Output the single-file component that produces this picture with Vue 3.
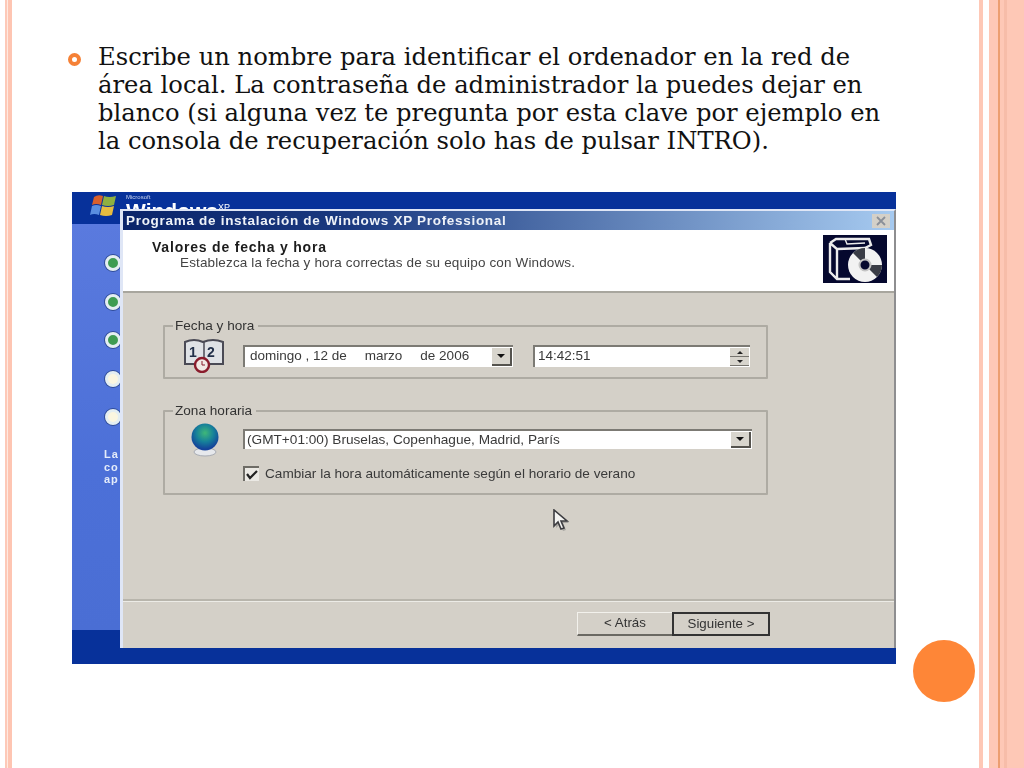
<script setup>
const lines = [
  'Escribe un nombre para identificar el ordenador en la red de',
  'área local. La contraseña de administrador la puedes dejar en',
  'blanco (si alguna vez te pregunta por esta clave por ejemplo en',
  'la consola de recuperación solo has de pulsar INTRO).'
]

const steps = ['done', 'done', 'done', 'todo', 'todo']
</script>

<template>
  <div class="slide">
    <div class="stripes-left">
      <span class="sl-a"></span>
      <span class="sl-b"></span>
      <span class="sl-c"></span>
    </div>

    <main class="content">
      <div class="bullet-row">
        <span class="bullet"></span>
        <p class="bullet-text">
          <span v-for="line in lines" :key="line" class="line">{{ line }}</span>
        </p>
      </div>

      <div class="shot">
        <div class="desk-top">
          <svg class="win-logo" viewBox="0 0 28 24" width="28" height="24">
            <path d="M5 3 Q9 0 14 2 L12 11 Q7 9 3 11 Z" fill="#d9602c" />
            <path d="M15 2 Q20 4 27 2 L25 11 Q19 13 13 11 Z" fill="#8fb040" />
            <path d="M3 12 Q7 10 12 12 L10 21 Q5 19 1 21 Z" fill="#5a8ee0" />
            <path d="M13 12 Q19 14 25 12 L23 21 Q17 23 11 21 Z" fill="#e6bc40" />
          </svg>
          <div class="win-brand">
            <span class="ms">Microsoft</span>
            <span class="wx">Windows<sup>XP</sup></span>
          </div>
        </div>
        <div class="desk-mid">
          <div class="steps">
            <span v-for="(s, i) in steps" :key="i" class="step" :class="s"></span>
          </div>
          <div class="side-note">La<br />co<br />ap</div>
        </div>
        <div class="desk-foot"></div>

        <div class="dialog">
          <div class="titlebar">
            <span class="title">Programa de instalación de Windows XP Professional</span>
            <span class="close">
              <svg viewBox="0 0 12 10" width="12" height="10">
                <path d="M2 1 L10 9 M10 1 L2 9" stroke="#8a8f98" stroke-width="1.8" />
              </svg>
            </span>
          </div>

          <div class="head">
            <div class="head-text">
              <div class="head-title">Valores de fecha y hora</div>
              <div class="head-sub">Establezca la fecha y hora correctas de su equipo con Windows.</div>
            </div>
            <div class="head-icon">
              <svg viewBox="0 0 64 48" width="64" height="48">
                <rect width="64" height="48" fill="#05082e" />
                <path d="M7 8 L7 37 L14 44 L27 44 M14 44 L14 14 L7 8 M7 8 L13 4 L46 4 L48 10 L42 13 L14 14" fill="none" stroke="#ececec" stroke-width="2.4" />
                <path d="M22 4 L24 9 L42 8" fill="none" stroke="#ececec" stroke-width="1.4" />
                <circle cx="42" cy="30" r="17" fill="#f2f2f2" />
                <path d="M42 30 L30 18 A17 17 0 0 1 42 13 Z M42 30 L59 30 A17 17 0 0 1 54 42 Z" fill="#3a3d46" />
                <circle cx="42" cy="30" r="5.5" fill="#05082e" stroke="#c4c4c4" stroke-width="2" />
              </svg>
            </div>
          </div>

          <div class="body">
            <fieldset class="group group-date">
              <legend>Fecha y hora</legend>
              <div class="group-row">
                <svg class="cal-icon" viewBox="0 0 44 36" width="44" height="36">
                  <path d="M3 5 Q12 1 21 5 Q31 1 41 5 L41 27 L3 27 Z" fill="#dfe2e6" stroke="#4a4a55" stroke-width="2" />
                  <path d="M22 5 L22 27" stroke="#4a4a55" stroke-width="1.5" />
                  <text x="7" y="20" class="cal-num">1</text>
                  <text x="25" y="20" class="cal-num">2</text>
                  <circle cx="20" cy="28" r="7" fill="#f2e8e4" stroke="#8a1c2c" stroke-width="2.4" />
                  <path d="M20 24 L20 28 L23 28" stroke="#8a1c2c" stroke-width="1" fill="none" />
                </svg>
                <div class="field date-field">
                  <span class="date-part p1">domingo , 12 de</span>
                  <span class="date-part p2">marzo</span>
                  <span class="date-part p3">de 2006</span>
                  <span class="drop"><i></i></span>
                </div>
                <div class="field time-field">
                  <span>14:42:51</span>
                  <span class="spin">
                    <b><i class="up"></i></b>
                    <b><i class="down"></i></b>
                  </span>
                </div>
              </div>
            </fieldset>

            <fieldset class="group group-zone">
              <legend>Zona horaria</legend>
              <div class="group-row zone-row">
                <svg class="globe" viewBox="0 0 36 34" width="36" height="34">
                  <defs>
                    <radialGradient id="gl" cx="50%" cy="35%" r="60%">
                      <stop offset="0" stop-color="#3fb878" />
                      <stop offset="0.55" stop-color="#16809a" />
                      <stop offset="1" stop-color="#14429a" />
                    </radialGradient>
                  </defs>
                  <ellipse cx="18" cy="29" rx="11" ry="4" fill="#e6e8ec" stroke="#a8acb4" />
                  <circle cx="18" cy="14" r="13.5" fill="url(#gl)" />
                </svg>
                <div class="field zone-field">
                  <span>(GMT+01:00) Bruselas, Copenhague, Madrid, París</span>
                  <span class="drop"><i></i></span>
                </div>
              </div>
              <label class="check-row">
                <span class="check">
                  <svg viewBox="0 0 12 10" width="12" height="10">
                    <path d="M1 4 L4 8 L11 1" stroke="#222" stroke-width="2.2" fill="none" />
                  </svg>
                </span>
                <span>Cambiar la hora automáticamente según el horario de verano</span>
              </label>
            </fieldset>
          </div>

          <div class="foot">
            <span class="btn back">&lt; Atrás</span>
            <span class="btn next">Siguiente &gt;</span>
          </div>

          <svg class="cursor" viewBox="0 0 22 26" width="22" height="26">
            <path d="M4 3 L4 19 L8 15 L11 22 L14 21 L11 14 L17 14 Z" fill="#8a8a88" opacity="0.6" />
            <path d="M2 1 L2 17 L6 13 L9 20 L12 19 L9 12 L15 12 Z" fill="#f4f4f2" stroke="#3c3c40" stroke-width="1.6" />
          </svg>
        </div>
      </div>
    </main>

    <div class="stripes-right">
      <span class="sr-a"></span>
      <span class="sr-gap"></span>
      <span class="sr-b"></span>
      <span class="sr-line"></span>
      <span class="sr-c"></span>
      <span class="sr-d"></span>
      <span class="sr-e"></span>
    </div>

    <span class="dot"></span>
  </div>
</template>

<style>
html, body {
  margin: 0;
  background: #fff;
}
</style>

<style scoped>
.slide {
  position: relative;
  display: flex;
  width: 1024px;
  height: 768px;
  overflow: hidden;
  background: #fff;
}

/* side stripes */
.stripes-left {
  display: flex;
  flex: none;
  width: 7px;
  margin-left: 5px;
}
.stripes-left span,
.stripes-right span {
  display: block;
}
.sl-a { width: 2px; background: #fdc9b8; }
.sl-b { width: 1px; background: #ffe9e0; }
.sl-c { width: 4px; background: #fec5b2; }

.stripes-right {
  display: flex;
  flex: none;
  width: 45px;
}
.sr-a { width: 4px; background: #fec8b6; }
.sr-gap { width: 6px; background: #fff; }
.sr-b { width: 9px; background: #fec8b6; }
.sr-line { width: 2px; background: #ec9e70; }
.sr-c { width: 4px; background: #fec8b6; }
.sr-d { width: 3px; background: #f7bda9; }
.sr-e { flex: 1; background: #fec8b6; }

.content {
  flex: 1;
  min-width: 0;
}

/* bullet text */
.bullet-row {
  display: flex;
  height: 192px;
  padding: 43px 0 0 56px;
  box-sizing: border-box;
}
.bullet {
  flex: none;
  width: 5px;
  height: 5px;
  margin: 10px 17px 0 0;
  border: 4px solid #f58136;
  border-radius: 50%;
}
.bullet-text {
  margin: 0;
  font-family: "DejaVu Serif", "Liberation Serif", serif;
  font-size: 24.25px;
  line-height: 28px;
  color: #111;
  white-space: nowrap;
}
.line {
  display: block;
}

/* screenshot */
.shot {
  position: relative;
  display: flex;
  flex-direction: column;
  width: 824px;
  height: 472px;
  margin-left: 60px;
  overflow: hidden;
  font-family: "Liberation Sans", Arial, sans-serif;
  filter: blur(0.7px);
}
.desk-top {
  display: flex;
  flex: none;
  height: 32px;
  padding: 2px 0 0 17px;
  box-sizing: border-box;
  background: #07319a;
}
.win-logo {
  flex: none;
}
.win-brand {
  display: flex;
  flex-direction: column;
  height: 15px;
  margin-left: 9px;
  overflow: hidden;
  color: #fff;
}
.ms {
  flex: none;
  font-size: 6px;
  line-height: 7px;
  color: #c8d4f0;
}
.wx {
  flex: none;
  font-size: 21px;
  font-weight: bold;
  line-height: 22px;
  margin-top: -1px;
}
.wx sup {
  font-size: 9px;
  font-weight: normal;
  line-height: 0;
}
.desk-mid {
  flex: 1;
  padding: 31px 0 0 33px;
  background: linear-gradient(180deg, #5a7ade 0%, #4c70d8 60%, #4a6ed4 100%);
}
.steps {
  display: flex;
  flex-direction: column;
  gap: 22.5px;
}
.step {
  width: 16px;
  height: 16px;
  box-sizing: border-box;
  border: 3px solid #e4eef2;
  border-radius: 50%;
  box-shadow: 0 0 0 1px #2f4c98;
}
.step.done { background: #3e9c52; }
.step.todo { background: #fbf6e0; }
.side-note {
  margin: 23px 0 0 -1px;
  font-size: 11px;
  font-weight: bold;
  letter-spacing: 1px;
  line-height: 12.7px;
  color: #e4ecfa;
}
.desk-foot {
  flex: none;
  height: 34px;
  background: #07319a;
}

/* dialog window */
.dialog {
  position: absolute;
  left: 48px;
  top: 17px;
  right: 0;
  bottom: 16px;
  display: flex;
  flex-direction: column;
  box-sizing: border-box;
  border-left: 3px solid #dfe6f6;
  border-top: 2px solid #dfe6f6;
  border-right: 2px solid #8e8e90;
  color: #2c2c2c;
  background: #d4d0c8;
}
.titlebar {
  display: flex;
  flex: none;
  align-items: center;
  justify-content: space-between;
  height: 19px;
  padding: 0 4px 0 3px;
  background: linear-gradient(90deg, #0a246a 0%, #1b3a80 30%, #a6caf0 100%);
}
.title {
  font-size: 13.5px;
  font-weight: bold;
  letter-spacing: 0.7px;
  line-height: 16px;
  color: #eef2f8;
  white-space: nowrap;
}
.close {
  display: flex;
  align-items: center;
  justify-content: center;
  width: 18px;
  height: 14px;
  background: #d4d0c8;
}
.head {
  display: flex;
  flex: none;
  justify-content: space-between;
  height: 63px;
  padding: 5px 7px 0 29px;
  box-sizing: border-box;
  border-bottom: 2px solid #a8a69e;
  background: #fff;
}
.head-title {
  margin-top: 4px;
  font-size: 14px;
  font-weight: bold;
  letter-spacing: 0.8px;
  line-height: 16px;
  color: #1c1c1c;
}
.head-sub {
  margin: 0 0 0 28px;
  font-size: 13.5px;
  letter-spacing: 0.14px;
  line-height: 16px;
  color: #444;
  white-space: nowrap;
}
.head-icon {
  flex: none;
  height: 48px;
}
.body {
  flex: 1;
  display: flex;
  flex-direction: column;
  gap: 24px;
  padding: 25px 0 0 40px;
  border-bottom: 2px solid #b8b5ac;
}
.group {
  width: 605px;
  margin: 0;
  padding: 0;
  box-sizing: border-box;
  border: 2px solid #aeaba3;
  border-radius: 1px;
}
.group legend {
  margin-left: 8px;
  padding: 0 4px 0 2px;
  font-size: 13.6px;
  line-height: 16px;
  color: #333;
}
.group-date {
  height: 61px;
}
.group-zone {
  height: 92px;
}
.group-row {
  display: flex;
  align-items: center;
  height: 30px;
  margin-top: 7px;
}
.cal-icon {
  flex: none;
  width: 44px;
  margin: 0 17px 3px 17px;
}
.cal-num {
  font: bold 14px "Liberation Sans", sans-serif;
  fill: #22304a;
}
.field {
  position: relative;
  display: flex;
  align-items: center;
  box-sizing: border-box;
  height: 22px;
  padding: 0 0 3px 5px;
  border-top: 2px solid #7c7a74;
  border-left: 2px solid #7c7a74;
  background: #fff;
  color: #3a3a3a;
  font-size: 13.5px;
  white-space: nowrap;
}
.date-field {
  width: 270px;
}
.date-part.p2 { margin-left: 18px; }
.date-part.p3 { margin-left: 18px; }
.drop {
  position: absolute;
  top: 1px;
  right: 1px;
  bottom: 1px;
  display: flex;
  align-items: center;
  justify-content: center;
  width: 18px;
  border-right: 2px solid #55534e;
  border-bottom: 2px solid #55534e;
  background: #d8d5cd;
}
.drop i {
  width: 0;
  height: 0;
  border: 4px solid transparent;
  border-top: 4px solid #111;
  border-bottom-width: 0;
}
.time-field {
  width: 217px;
  margin-left: 20px;
  padding-left: 3px;
}
.spin {
  position: absolute;
  top: 1px;
  right: 1px;
  bottom: 1px;
  display: flex;
  flex-direction: column;
  width: 19px;
}
.spin b {
  flex: 1;
  display: flex;
  align-items: center;
  justify-content: center;
  border-bottom: 1px solid #77756f;
  background: #d8d5cd;
}
.spin i {
  width: 0;
  height: 0;
  border: 3px solid transparent;
}
.spin .up {
  border-top-width: 0;
  border-bottom-color: #222;
}
.spin .down {
  border-bottom-width: 0;
  border-top-color: #222;
}
.zone-row {
  height: 34px;
  margin-top: 3px;
}
.globe {
  flex: none;
  margin: 2px 20px 0 22px;
}
.zone-field {
  width: 509px;
  height: 20px;
  padding: 0 0 2px 2px;
  font-size: 13.65px;
}
.check-row {
  display: flex;
  align-items: center;
  gap: 6px;
  margin: 10px 0 0 78px;
  color: #3a3a3a;
  font-size: 13.6px;
  white-space: nowrap;
}
.check {
  display: flex;
  align-items: center;
  justify-content: center;
  width: 16px;
  height: 15px;
  box-sizing: border-box;
  border-top: 2px solid #6e6c66;
  border-left: 2px solid #6e6c66;
  background: #ebe9e4;
}
.foot {
  display: flex;
  flex: none;
  justify-content: flex-end;
  height: 47px;
  padding: 10px 124px 0 0;
  box-sizing: border-box;
  border-top: 1px solid #ecebe6;
}
.btn {
  display: flex;
  align-items: center;
  justify-content: center;
  width: 95px;
  height: 24px;
  padding-bottom: 2px;
  box-sizing: border-box;
  font-size: 13.3px;
  color: #333;
}
.btn.back {
  border-top: 1px solid #f2f1ec;
  border-left: 1px solid #f2f1ec;
  border-bottom: 2px solid #6a6862;
}
.btn.next {
  width: 98px;
  border: 2px solid #333;
}
.cursor {
  position: absolute;
  left: 429px;
  top: 298px;
}

/* corner circle */
.dot {
  position: absolute;
  left: 913px;
  top: 640px;
  width: 62px;
  height: 62px;
  border-radius: 50%;
  background: #fe8637;
}
</style>
